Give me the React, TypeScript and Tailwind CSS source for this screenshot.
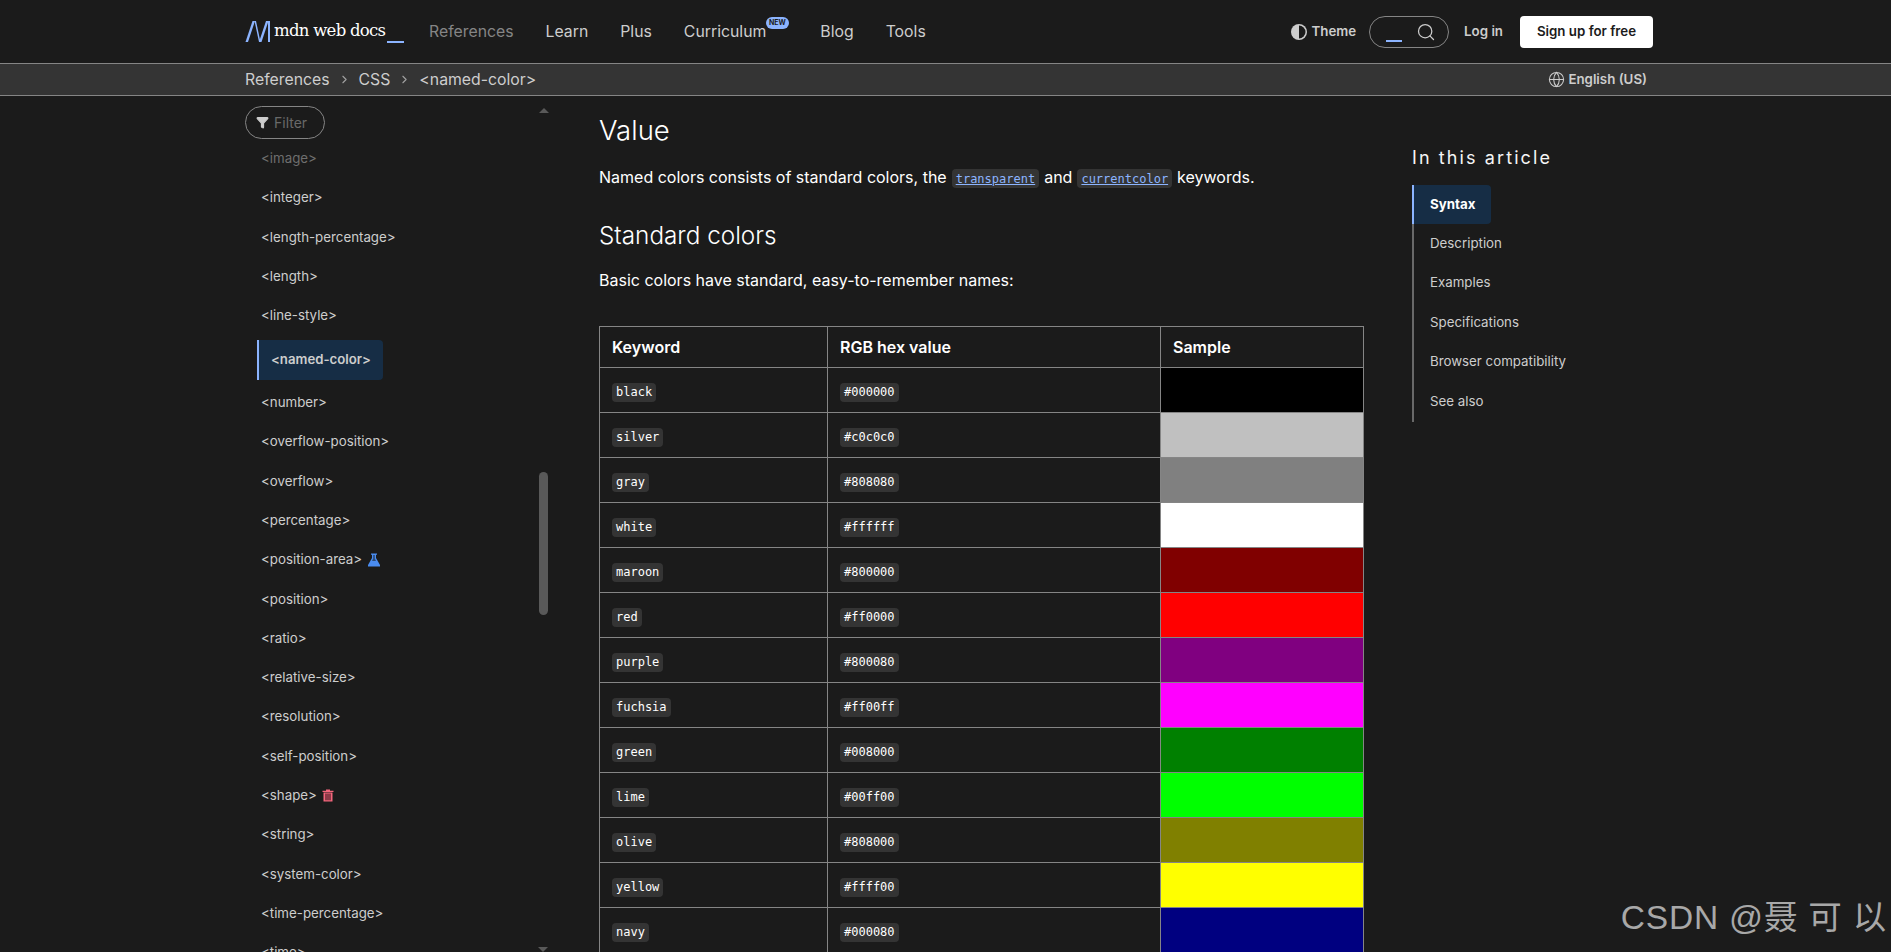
import { Filter, Search, Globe, ChevronRight } from "lucide-react";

const topNav = ["Learn", "Plus", "Curriculum", "Blog", "Tools"];

const sidebarItems = [
  "<image>",
  "<integer>",
  "<length-percentage>",
  "<length>",
  "<line-style>",
  "<named-color>",
  "<number>",
  "<overflow-position>",
  "<overflow>",
  "<percentage>",
  "<position-area>",
  "<position>",
  "<ratio>",
  "<relative-size>",
  "<resolution>",
  "<self-position>",
  "<shape>",
  "<string>",
  "<system-color>",
  "<time-percentage>",
  "<time>",
];

const tocItems = ["Description", "Examples", "Specifications", "Browser compatibility", "See also"];

const colors = [
  { name: "black", hex: "#000000" },
  { name: "silver", hex: "#c0c0c0" },
  { name: "gray", hex: "#808080" },
  { name: "white", hex: "#ffffff" },
  { name: "maroon", hex: "#800000" },
  { name: "red", hex: "#ff0000" },
  { name: "purple", hex: "#800080" },
  { name: "fuchsia", hex: "#ff00ff" },
  { name: "green", hex: "#008000" },
  { name: "lime", hex: "#00ff00" },
  { name: "olive", hex: "#808000" },
  { name: "yellow", hex: "#ffff00" },
  { name: "navy", hex: "#000080" },
];

function Logo() {
  return (
    <div className="flex items-center w-[184px] h-full">
      <svg width="26" height="24" viewBox="0 0 26 24" className="shrink-0">
        <path d="M0.5 22L7.5 1H10L3 22Z" fill="#8cb4ff" />
        <path d="M9.5 1H11L15.5 22H14Z" fill="#8cb4ff" />
        <path d="M14 22L21 1H23.5L16.5 22Z" fill="#8cb4ff" />
        <path d="M23 1H25V22H23Z" fill="#8cb4ff" />
      </svg>
      <span className="ml-[3px] text-[16.5px] leading-none text-white font-['DejaVu_Serif',serif] tracking-[-0.72px]">
        mdn web docs
      </span>
      <span className="ml-[2px] mt-[21px] w-[17px] h-[2px] bg-[#8cb4ff]" />
    </div>
  );
}

function Flask() {
  return (
    <svg width="14" height="14" viewBox="0 0 14 14">
      <path d="M4 0.5H10V1.8H9V5L13 12V13.5H1V12L5 5V1.8H4Z" fill="#4a8cf0" />
      <path d="M6.2 2H7.8V5.5L9 8H5L6.2 5.5Z" fill="#2a4a78" />
    </svg>
  );
}

function Trash() {
  return (
    <svg width="12" height="13" viewBox="0 0 12 13">
      <path d="M4 0.5H8V1.8H11.5V3H0.5V1.8H4Z" fill="#f4667c" />
      <path d="M1.5 3.5H10.5V12.5H1.5Z" fill="#f4667c" />
      <path d="M3 4.5H9V11.3H3Z" fill="#8e3a48" />
    </svg>
  );
}

function Code({ children }: { children: string }) {
  return (
    <code className="inline-block h-[19px] px-[4px] rounded-[4px] bg-[#343434] text-[12px] leading-[19px] text-white font-['DejaVu_Sans_Mono',monospace] align-middle">
      {children}
    </code>
  );
}

function LinkCode({ children }: { children: string }) {
  return (
    <code className="inline-block h-[19px] px-[4px] mx-[0.5px] rounded-[4px] bg-[#343434] text-[12px] leading-[21px] text-[#8cb4ff] underline font-['DejaVu_Sans_Mono',monospace] align-[0px]">
      {children}
    </code>
  );
}

export default function App() {
  return (
    <div className="relative h-screen overflow-hidden flex flex-col bg-[#1b1b1b] text-white font-['Inter',sans-serif]">
      {/* top nav */}
      <header className="h-[63px] shrink-0 flex items-center pl-[245px] pr-[238px]">
        <Logo />
        <nav className="flex items-center text-[15.8px] text-[#cdcdcd]">
          <span className="text-[#858585] mr-[32px]">References</span>
          {topNav.map((item) => (
            <span key={item} className={item === "Curriculum" ? "relative mr-[54px]" : "mr-[32px]"}>
              {item}
              {item === "Curriculum" && (
                <span className="absolute left-[82px] -top-[3px] w-[23px] h-[12px] rounded-full bg-[#8cb4ff] text-[#1b1b1b] text-[7px] font-bold leading-[12px] text-center">
                  NEW
                </span>
              )}
            </span>
          ))}
        </nav>
        <div className="ml-auto flex items-center">
          <svg width="16" height="16" viewBox="0 0 16 16" className="mr-[4px]">
            <circle cx="8" cy="8" r="8" fill="#cdcdcd" />
            <path d="M8 1.5A6.5 6.5 0 0 1 8 14.5Z" fill="#1b1b1b" />
          </svg>
          <span className="text-[13.3px] font-semibold text-[#cdcdcd] mr-[13px]">Theme</span>
          <div className="relative w-[80px] h-[32px] rounded-full border border-[#858585] flex items-center justify-end pr-[12px] mr-[15px]">
            <span className="absolute left-[16px] top-[23px] w-[16px] h-[2px] bg-[#8cb4ff]" />
            <Search size={20} strokeWidth={1.5} className="text-[#cdcdcd]" />
          </div>
          <span className="text-[13.3px] font-semibold text-[#cdcdcd] mr-[17px]">Log in</span>
          <button className="w-[133px] h-[32px] rounded-[4px] bg-white text-[#1b1b1b] text-[13.3px] font-semibold">
            Sign up for free
          </button>
        </div>
      </header>

      {/* breadcrumb */}
      <div className="h-[33px] shrink-0 flex items-center pl-[245px] pr-[244px] bg-[#343434] border-y border-[#858585] text-[15.8px] text-[#cdcdcd]">
        <span>References</span>
        <ChevronRight size={13} className="mx-[8px] text-[#a0a0a0]" />
        <span>CSS</span>
        <ChevronRight size={13} className="mx-[8px] text-[#a0a0a0]" />
        <span>&lt;named-color&gt;</span>
        <div className="ml-auto flex items-center gap-[3px] text-[13.3px] font-semibold">
          <Globe size={17} strokeWidth={1.5} />
          <span>English (US)</span>
        </div>
      </div>

      <div className="flex-1 min-h-0 flex pl-[245px]">
        {/* sidebar */}
        <aside className="relative w-[354px] shrink-0 overflow-hidden">
          <div className="mt-[10px] w-[80px] h-[33px] rounded-full border border-[#858585] flex items-center pl-[10px] gap-[5px] text-[14px] text-[#696969]">
            <Filter size={13} fill="#cdcdcd" className="text-[#cdcdcd]" />
            <span>Filter</span>
          </div>
          <ul className="pt-[0.5px] text-[13.3px] text-[#cdcdcd]">
            {sidebarItems.map((item, i) => {
              if (item === "<named-color>") {
                return (
                  <li key={item} className="h-[47.4px] flex items-center">
                    <span className="ml-[12px] h-[40px] w-[126px] flex items-center pl-[12px] border-l-2 border-[#8cb4ff] bg-[#162d45] rounded-r-[4px] font-semibold text-[13.2px]">
                      {item}
                    </span>
                  </li>
                );
              }
              return (
                <li
                  key={item}
                  className={`h-[39.3px] flex items-center gap-[5px] pl-[16px] ${i === 0 ? "text-[#6e6e6e]" : ""}`}
                >
                  {item}
                  {item === "<position-area>" && <Flask />}
                  {item === "<shape>" && <Trash />}
                </li>
              );
            })}
          </ul>
          {/* scrollbar */}
          <div className="absolute left-[294px] top-[376px] w-[9px] h-[143px] rounded-full bg-[#595959]" />
          <div className="absolute left-[294px] top-[12px] w-0 h-0 border-x-[5px] border-x-transparent border-b-[5px] border-b-[#595959]" />
          <div className="absolute right-[51px] bottom-0 w-0 h-0 border-x-[5px] border-x-transparent border-t-[5px] border-t-[#595959]" />
        </aside>

        {/* article */}
        <main className="w-[765px] shrink-0">
          <h2 className="mt-[15px] text-[27.5px] leading-[38px] font-light">Value</h2>
          <p className="mt-[15px] text-[16px] leading-[26px]">
            Named colors consists of standard colors, the <LinkCode>transparent</LinkCode> and{" "}
            <LinkCode>currentcolor</LinkCode> keywords.
          </p>
          <h3 className="mt-[28px] text-[24.3px] leading-[34px] font-light">Standard colors</h3>
          <p className="mt-[15px] text-[16px] leading-[26px]">Basic colors have standard, easy-to-remember names:</p>
          <table className="mt-[33px] w-[765px] table-fixed border-collapse text-left">
            <thead>
              <tr className="h-[40.5px] text-[16px] font-semibold">
                <th className="w-[228px] border border-[#858585] px-[12px] font-semibold">Keyword</th>
                <th className="w-[333px] border border-[#858585] px-[12px] font-semibold">RGB hex value</th>
                <th className="border border-[#858585] px-[12px] font-semibold">Sample</th>
              </tr>
            </thead>
            <tbody>
              {colors.map((c) => (
                <tr key={c.name} className="h-[45px]">
                  <td className="border border-[#858585] px-[12px] pt-[2px]">
                    <Code>{c.name}</Code>
                  </td>
                  <td className="border border-[#858585] px-[12px] pt-[2px]">
                    <Code>{c.hex}</Code>
                  </td>
                  <td className="border border-[#858585]" style={{ backgroundColor: c.hex }} />
                </tr>
              ))}
            </tbody>
          </table>
        </main>

        {/* toc */}
        <aside className="ml-[48px] w-[240px]">
          <h2 className="mt-[48px] text-[18px] leading-[28px] tracking-[2.1px] text-[#f5f5f5]">In this article</h2>
          <ul className="mt-[13px] text-[13.3px] text-[#cdcdcd] border-l-2 border-[#696969] w-[200px]">
            <li className="-ml-[2px] w-[79px] h-[39px] flex items-center pl-[16px] border-l-2 border-[#8cb4ff] bg-[#162d45] rounded-r-[4px] font-bold text-white">
              Syntax
            </li>
            {tocItems.map((item) => (
              <li key={item} className="h-[39.5px] flex items-center pl-[16px]">
                {item}
              </li>
            ))}
          </ul>
        </aside>
      </div>

      {/* watermark */}
      <div className="absolute right-[4px] bottom-[14px] text-[33.5px] leading-[40px] tracking-[0.8px] text-[#a8a8a8] font-['Liberation_Sans','Noto_Sans_CJK_SC',sans-serif]">
        CSDN @聂 可 以
      </div>
    </div>
  );
}
